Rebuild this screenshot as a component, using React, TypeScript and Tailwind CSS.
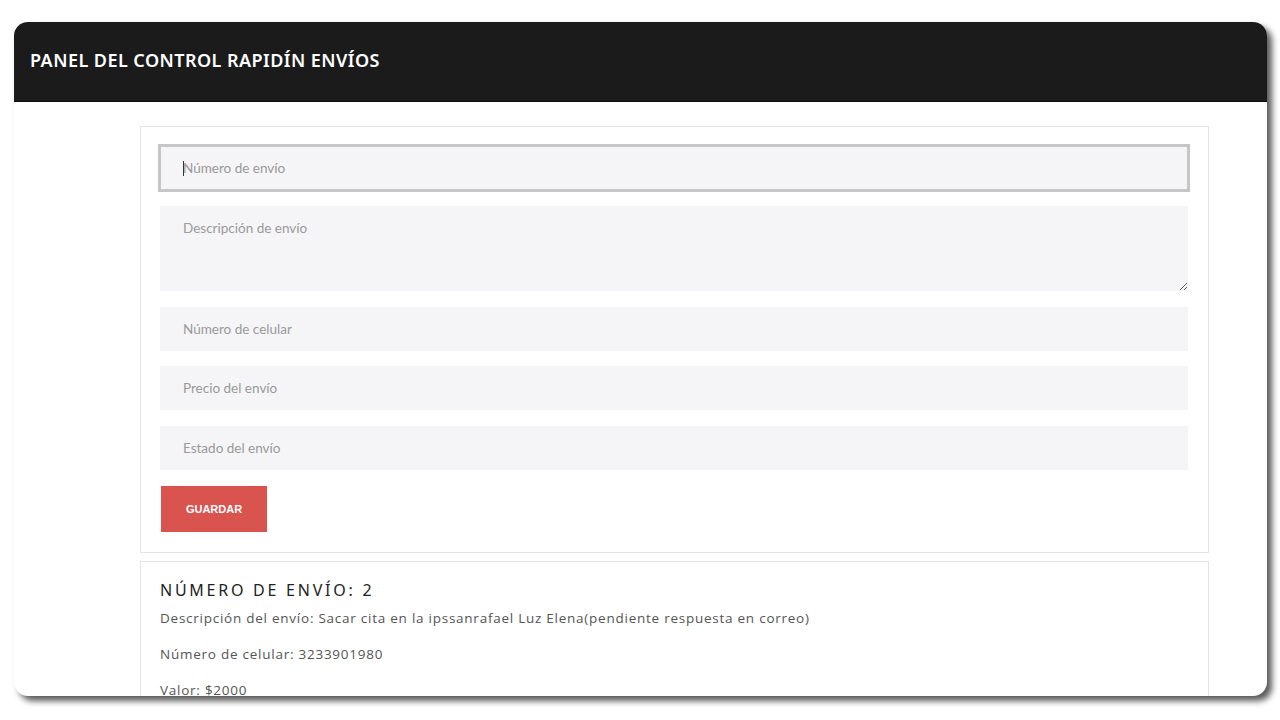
const fieldBase =
  "block w-[1028px] bg-[#f5f5f7] px-[23px] text-[13.5px] text-[#555] placeholder:text-[#9a9a9a] focus:outline-none";

export default function App() {
  return (
    <div className="w-[1280px] h-[720px] bg-white pl-[14px] pt-[22px] font-['Lato',sans-serif]">
      <div className="w-[1253px] h-[674px] rounded-[14px] overflow-hidden bg-white shadow-[5px_5px_6px_rgba(0,0,0,0.65)] flex flex-col">
        <header className="h-[80px] shrink-0 bg-[#1b1b1b] flex items-center pl-[16px] pb-[2px] border-b border-[#0c0c0c]">
          <h1 className="text-white text-[18px] font-semibold tracking-[0.45px] font-['Noto_Sans',sans-serif]">
            PANEL DEL CONTROL RAPIDÍN ENVÍOS
          </h1>
        </header>

        <main className="pl-[126px] pt-[24px]">
          <form className="w-[1069px] border border-[#e3e3e3] pt-[19px] px-[19px] pb-[20px] flex flex-col">
            <div className="relative w-[1028px]">
              <input
                type="text"
                placeholder="Número de envío"
                className={`${fieldBase} h-[44px] outline outline-[3px] outline-[#c6c6c6] -outline-offset-1`}
              />
              <span className="absolute left-[23px] top-[15px] w-px h-[15px] bg-[#333]" />
            </div>
            <textarea
              placeholder="Descripción de envío"
              className={`${fieldBase} mt-[16px] h-[85px] pt-[12px] resize-y`}
            />
            <input type="text" placeholder="Número de celular" className={`${fieldBase} mt-[16px] h-[44px]`} />
            <input type="text" placeholder="Precio del envío" className={`${fieldBase} mt-[15px] h-[44px]`} />
            <input type="text" placeholder="Estado del envío" className={`${fieldBase} mt-[16px] h-[44px]`} />
            <div className="mt-[16px] pl-px">
              <button
                type="button"
                className="w-[106px] h-[46px] bg-[#d9534f] text-white text-[11px] font-bold font-['Liberation_Sans',sans-serif]"
              >
                GUARDAR
              </button>
            </div>
          </form>

          <section className="mt-[8px] w-[1069px] border border-[#e3e3e3] px-[19px] pt-[17px] pb-[20px] text-[#555] font-['Open_Sans',sans-serif]">
            <h2 className="text-[16px] tracking-[2.75px] text-[#222] font-['Noto_Sans',sans-serif] leading-[22px] mb-[7px]">
              NÚMERO DE ENVÍO: 2
            </h2>
            <p className="text-[13.5px] tracking-[0.75px] leading-[20px] mb-[16px]">
              Descripción del envío: Sacar cita en la ipssanrafael Luz Elena(pendiente respuesta en correo)
            </p>
            <p className="text-[13.5px] tracking-[0.75px] leading-[20px] mb-[16px]">
              Número de celular: 3233901980
            </p>
            <p className="text-[13.5px] tracking-[0.75px] leading-[20px] mb-[16px]">Valor: $2000</p>
          </section>
        </main>
      </div>
    </div>
  );
}
